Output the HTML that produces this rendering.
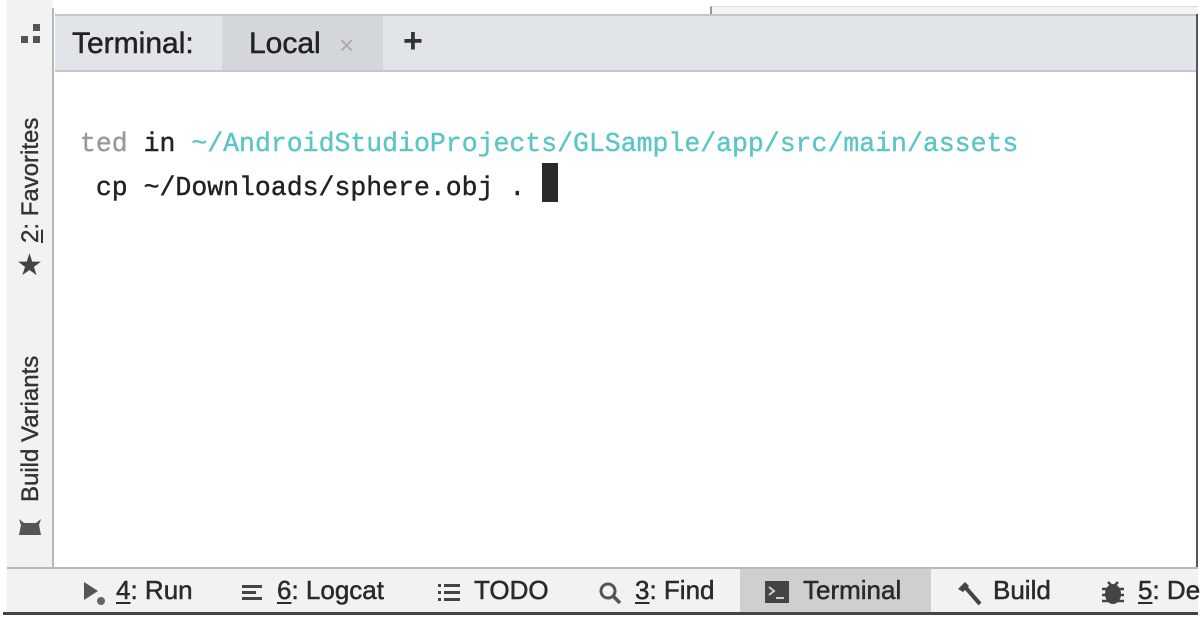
<!DOCTYPE html>
<html><head><meta charset="utf-8"><style>
*{margin:0;padding:0;box-sizing:border-box}
body{width:1201px;height:620px;background:#fff;position:relative;overflow:hidden;font-family:"Liberation Sans",sans-serif;color:#222}
.a{position:absolute}
.mono{font-family:"Liberation Mono",monospace;font-size:26.5px;white-space:pre;letter-spacing:0;-webkit-text-stroke:0.4px}
.bt{position:absolute;top:575px;font-size:26px;color:#2a2a2a;white-space:nowrap;-webkit-text-stroke:0.5px}
u{text-decoration:underline;text-underline-offset:3px}
</style></head><body>
<div class="a" style="left:710px;top:6px;width:488px;height:9px;background:#f3f3f3;border-top:1px solid #ddd;border-left:2px solid #999"></div>
<div class="a" style="left:7px;top:0;width:46px;height:568px;background:#f2f2f2"></div>
<div class="a" style="left:52px;top:8px;width:2px;height:560px;background:#b8b8b8"></div>
<div class="a" style="left:33px;top:24px;width:7px;height:7px;background:#555"></div>
<div class="a" style="left:21px;top:36px;width:7px;height:7px;background:#555"></div>
<div class="a" style="left:33px;top:36px;width:7px;height:7px;background:#555"></div>
<div class="a" style="left:17px;top:243px;width:160px;height:30px;transform-origin:0 0;transform:rotate(-90deg);font-size:24px;color:#333;white-space:nowrap;-webkit-text-stroke:0.4px"><u>2</u>: Favorites</div>
<div class="a" style="left:16px;top:251px;font-size:30px;color:#444;line-height:30px">★</div>
<div class="a" style="left:17px;top:502px;width:190px;height:30px;transform-origin:0 0;transform:rotate(-90deg);font-size:24px;color:#333;white-space:nowrap;-webkit-text-stroke:0.4px">Build Variants</div>
<svg class="a" style="left:17px;top:515px" width="26" height="22"><path d="M2 4 L7 8 L19 8 L24 4 L22 10 L24 20 L2 20 L4 10 Z" fill="#555"/></svg>
<div class="a" style="left:55px;top:14px;width:1143px;height:58px;background:#e1e5ea;border-top:2px solid #c4c8cc;border-bottom:2px solid #c4c8cc"></div>
<div class="a" style="left:222px;top:16px;width:161px;height:54px;background:#d3d6da"></div>
<div class="a" style="left:72px;top:27px;font-size:30px;color:#222;-webkit-text-stroke:0.5px">Terminal:</div>
<div class="a" style="left:249px;top:27px;font-size:30px;color:#222;-webkit-text-stroke:0.5px">Local</div>
<div class="a" style="left:339px;top:30px;font-size:26px;color:#aaa">×</div>
<div class="a" style="left:403px;top:22px;font-size:34px;color:#333;font-weight:bold">+</div>
<div class="a" style="left:1196px;top:14px;width:2px;height:600px;background:#555"></div>
<div class="a mono" style="left:80px;top:129px"><span style="color:#999">ted</span> <span style="color:#222">in</span> <span style="color:#5cc6c6">~/AndroidStudioProjects/GLSample/app/src/main/assets</span></div>
<div class="a mono" style="left:80px;top:173px;color:#222"> cp ~/Downloads/sphere.obj .</div>
<div class="a" style="left:542px;top:163px;width:16px;height:39px;background:#2a2a2a"></div>
<div class="a" style="left:7px;top:567px;width:1191px;height:2px;background:#b8b8b8"></div>
<div class="a" style="left:7px;top:569px;width:1191px;height:43px;background:#f2f2f2"></div>
<div class="a" style="left:740px;top:569px;width:191px;height:43px;background:#cfcfcf"></div>
<div class="a" style="left:3px;top:612px;width:1195px;height:3px;background:#444"></div>
<svg class="a" style="left:82px;top:580px" width="30" height="28"><path d="M2 2 L16 11 L2 20 Z" fill="#555"/><circle cx="19" cy="21" r="4" fill="#666"/></svg>
<div class="bt" style="left:116px"><u>4</u>: Run</div>
<svg class="a" style="left:242px;top:583px" width="24" height="20"><rect x="0" y="2" width="20" height="3" fill="#444"/><rect x="0" y="8" width="14" height="3" fill="#444"/><rect x="0" y="14" width="20" height="3" fill="#444"/></svg>
<div class="bt" style="left:277px"><u>6</u>: Logcat</div>
<svg class="a" style="left:438px;top:583px" width="26" height="20"><g fill="#444"><rect x="0" y="1" width="3" height="3"/><rect x="0" y="8" width="3" height="3"/><rect x="0" y="15" width="3" height="3"/><rect x="6" y="1" width="16" height="3"/><rect x="6" y="8" width="16" height="3"/><rect x="6" y="15" width="16" height="3"/></g></svg>
<div class="bt" style="left:474px">TODO</div>
<svg class="a" style="left:598px;top:581px" width="26" height="26"><circle cx="10" cy="10" r="7" fill="none" stroke="#555" stroke-width="3"/><path d="M15 15 L22 22" stroke="#555" stroke-width="3.5"/></svg>
<div class="bt" style="left:635px"><u>3</u>: Find</div>
<svg class="a" style="left:765px;top:581px" width="26" height="24"><rect width="24" height="22" fill="#444"/><path d="M4 6 L9 10 L4 14" stroke="#ccc" stroke-width="2" fill="none"/><path d="M11 17 H19" stroke="#ccc" stroke-width="2"/></svg>
<div class="bt" style="left:803px">Terminal</div>
<svg class="a" style="left:955px;top:580px" width="30" height="28"><path d="M3 9 L10 2 L14 6 L8 12 Z" fill="#444"/><path d="M11 8 L25 24" stroke="#444" stroke-width="4"/></svg>
<div class="bt" style="left:993px">Build</div>
<svg class="a" style="left:1100px;top:579px" width="26" height="28"><ellipse cx="13" cy="15" rx="8" ry="10" fill="#444"/><path d="M2 10 H24 M2 16 H24 M2 22 H24 M8 3 L11 6 M18 3 L15 6" stroke="#444" stroke-width="2.5"/></svg>
<div class="bt" style="left:1138px"><u>5</u>: De</div>
</body></html>
